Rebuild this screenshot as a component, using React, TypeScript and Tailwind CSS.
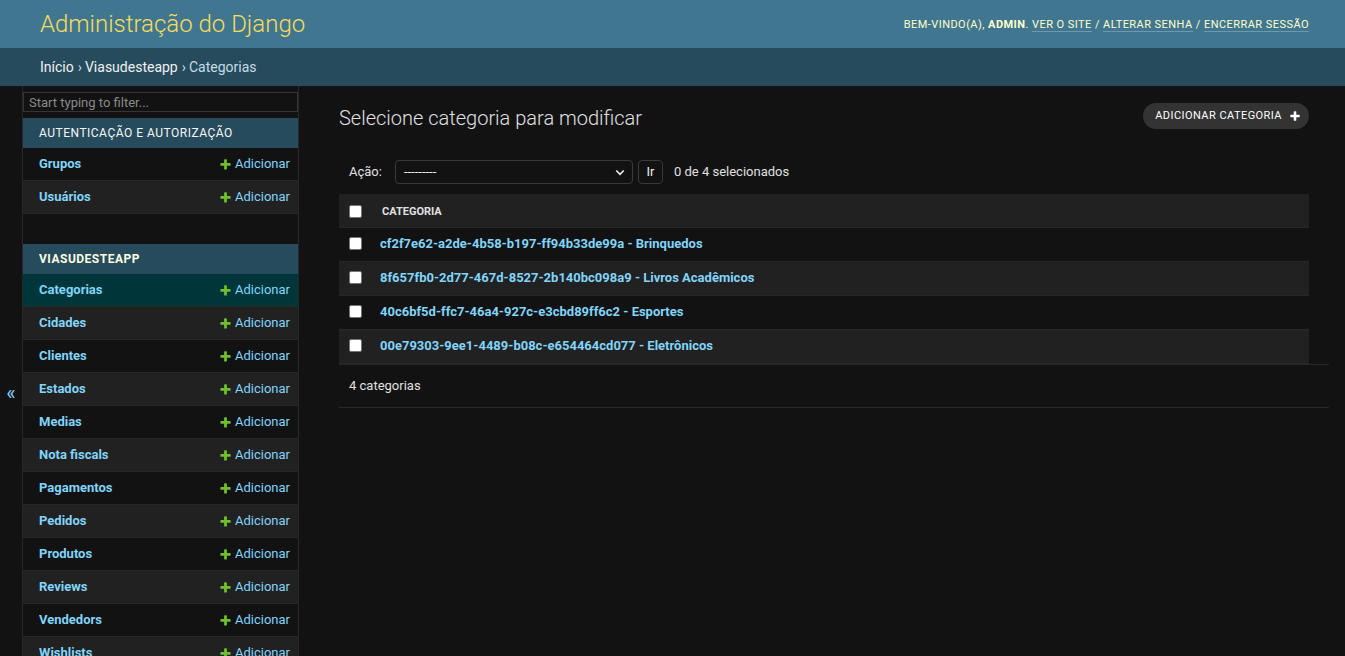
import React from "react";

const PLUS =
	"M1600 796v192q0 40-28 68t-68 28h-416v416q0 40-28 68t-68 28h-192q-40 0-68-28t-28-68v-416h-416q-40 0-68-28t-28-68v-192q0-40 28-68t68-28h416v-416q0-40 28-68t68-28h192q40 0 68 28t28 68v416h416q40 0 68 28t28 68z";

const Plus = ({className}: {className: string}) => (
	<svg viewBox="0 0 1792 1792" className={className} aria-hidden="true">
		<path fill="currentColor" d={PLUS} />
	</svg>
);

type Model = {name: string; current?: boolean};

const authModels: Model[] = [{name: "Grupos"}, {name: "Usuários"}];

const appModels: Model[] = [
	{name: "Categorias", current: true},
	{name: "Cidades"},
	{name: "Clientes"},
	{name: "Estados"},
	{name: "Medias"},
	{name: "Nota fiscals"},
	{name: "Pagamentos"},
	{name: "Pedidos"},
	{name: "Produtos"},
	{name: "Reviews"},
	{name: "Vendedors"},
	{name: "Wishlists"},
];

const categorias = [
	"cf2f7e62-a2de-4b58-b197-ff94b33de99a - Brinquedos",
	"8f657fb0-2d77-467d-8527-2b140bc098a9 - Livros Acadêmicos",
	"40c6bf5d-ffc7-46a4-927c-e3cbd89ff6c2 - Esportes",
	"00e79303-9ee1-4489-b08c-e654464cd077 - Eletrônicos",
];

const Checkbox = () => (
	<span className="block size-[13px] rounded-[2px] border border-[#767676] bg-white" />
);

const SidebarModule = ({
	title,
	models,
	current,
}: {
	title: string;
	models: Model[];
	current?: boolean;
}) => (
	<div className="mb-[30px]">
		<div
			className={`flex h-[30px] items-center bg-[#264b5d] pl-4 text-[12px] tracking-[0.5px] uppercase ${
				current ? "font-bold text-[#ffffe0]" : "text-[#f7f7f7]"
			}`}
		>
			{title}
		</div>
		{models.map((m, i) => {
			// linha selecionada, depois alternando escuro/claro
			const bg = m.current
				? "bg-[#00363a]"
				: i % 2 === 1
					? "bg-[#212121]"
					: "bg-[#121212]";
			return (
				<div
					key={m.name}
					className={`flex h-[33px] items-center justify-between border-b border-[#272727] pr-2 pl-4 text-[13px] ${bg}`}
				>
					<a className="font-bold text-[#81d4fa]">{m.name}</a>
					<a className="flex items-center gap-[3px] text-[#81d4fa]">
						<Plus className="size-[13px] text-[#70bf2b]" />
						Adicionar
					</a>
				</div>
			);
		})}
	</div>
);

export default function App() {
	return (
		<div className="min-h-screen bg-[#121212] font-['Roboto','Liberation_Sans',sans-serif] text-[#eeeeee]">
			<header className="flex h-12 items-center justify-between bg-[#417690] pr-[36px] pl-10">
				<h1 className="text-[24px] leading-none font-light text-[#f5dd5d]">
					Administração do Django
				</h1>
				<div className="pt-[2px] text-[11px] tracking-[0.45px] text-[#ffffcc] uppercase">
					Bem-vindo(a), <strong className="font-bold">admin</strong>.{" "}
					<a className="border-b border-white/25">Ver o site</a> /{" "}
					<a className="border-b border-white/25">Alterar senha</a> /{" "}
					<a className="border-b border-white/25">Encerrar sessão</a>
				</div>
			</header>

			<div className="flex h-[38px] items-center bg-[#264b5d] px-10 text-[14px] text-[#c4dce8]">
				<a className="text-[#f0f0f0]">Início</a>
				<span className="pr-[3px] pl-[4px]">›</span>
				<a className="text-[#f0f0f0]">Viasudesteapp</a>
				<span className="pr-[3px] pl-[4px]">›</span>
				<span>Categorias</span>
			</div>

			<div className="flex">
				<button className="flex w-[23px] shrink-0 items-center justify-center border-r border-[#272727] text-[20px] text-[#81d4fa]">
					«
				</button>

				<nav className="w-[276px] shrink-0 border-r border-[#272727]">
					<input
						className="mt-[6px] mb-[6px] block h-[20px] w-full border border-[#353535] bg-[#121212] px-[5px] text-[13px] text-[#eeeeee] outline-none placeholder:text-[#8a8a8a]"
						placeholder="Start typing to filter..."
					/>
					<SidebarModule title="Autenticação e Autorização" models={authModels} />
					<SidebarModule title="Viasudesteapp" models={appModels} current />
				</nav>

				<main className="min-w-0 flex-1 pt-[17px] pr-[36px] pl-10">
					<div className="flex items-start justify-between">
						<h2 className="mt-[3px] text-[20px] leading-6 font-light text-[#e0e0e0]">
							Selecione categoria para modificar
						</h2>
						<a className="flex h-[26px] items-center gap-[7px] rounded-[15px] bg-[#333333] pr-[8px] pl-[12px] text-[11px] tracking-[0.45px] text-white uppercase">
							Adicionar categoria
							<Plus className="size-[12px] text-white" />
						</a>
					</div>

					<div className="mt-5 flex h-[44px] items-center px-[10px] text-[13px] text-[#e0e0e0]">
						<span>Ação:</span>
						<div className="ml-[13px] flex h-[24px] w-[238px] items-center justify-between rounded-[4px] border border-[#3a3a3a] pr-[6px] pl-[8px] text-[#eeeeee]">
							<span>---------</span>
							<svg viewBox="0 0 16 16" className="size-[12px]" aria-hidden="true">
								<path
									d="M3 6l5 5 5-5"
									fill="none"
									stroke="#eeeeee"
									strokeWidth="2.2"
								/>
							</svg>
						</div>
						<button className="ml-[5px] flex h-[24px] w-[25px] items-center justify-center rounded-[4px] border border-[#3a3a3a] text-[#eeeeee]">
							Ir
						</button>
						<span className="ml-[11px]">0 de 4 selecionados</span>
					</div>

					<div className="text-[13px]">
						<div className="flex h-[34px] items-center border-b border-[#272727] bg-[#212121] pt-[1px]">
							<div className="w-[33px] shrink-0 pl-[10px]">
								<Checkbox />
							</div>
							<div className="pt-[2px] pl-[10px] text-[11px] font-bold text-[#e0e0e0] uppercase">
								Categoria
							</div>
						</div>
						{categorias.map((c, i) => (
							<div
								key={c}
								className={`flex h-[34px] items-center border-b border-[#272727] pb-[2px] ${
									i % 2 === 1 ? "bg-[#212121]" : "bg-[#121212]"
								}`}
							>
								<div className="w-[33px] shrink-0 pl-[10px]">
									<Checkbox />
								</div>
								<a className="pl-[8px] font-bold text-[#81d4fa]">{c}</a>
							</div>
						))}
					</div>

					<div className="mr-[-20px] flex h-[44px] items-center border-t border-b border-[#272727] pl-[10px] text-[13px] text-[#e0e0e0]">
						4 categorias
					</div>
				</main>
			</div>
		</div>
	);
}
